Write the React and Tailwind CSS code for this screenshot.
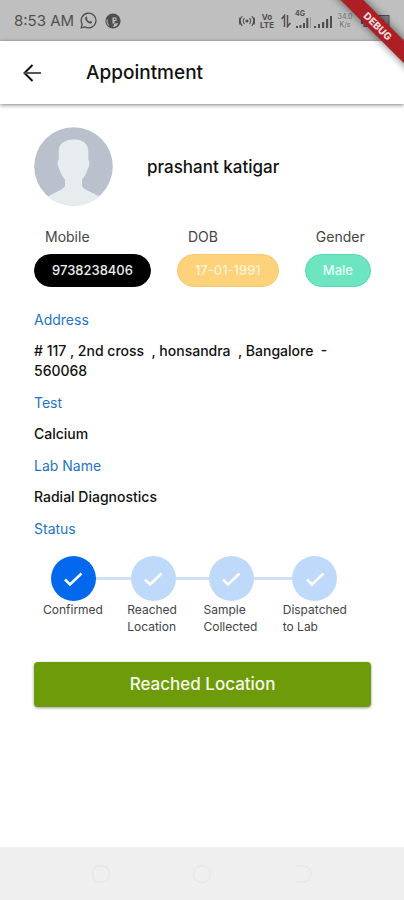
import React from 'react';

const details = [
  { label: 'Address', value: '# 117 , 2nd cross  , honsandra  , Bangalore  - 560068' },
  { label: 'Test', value: 'Calcium' },
  { label: 'Lab Name', value: 'Radial Diagnostics' },
];

const steps = [
  { first: 'Confirmed', second: '', done: true },
  { first: 'Reached', second: 'Location', done: false },
  { first: 'Sample', second: 'Collected', done: false },
  { first: 'Dispatched', second: 'to Lab', done: false },
];

const StatusBar = () => (
  <div className="h-[41px] bg-[#bfbfbf] flex items-center justify-between pl-[14px] pr-[14px] text-[#4f4f4f]">
    <div className="flex items-center">
      <span className="text-[15px] leading-5">8:53 AM</span>
      {/* WhatsApp */}
      <svg className="w-[17px] h-[17px] ml-[6px]" viewBox="0 0 18 18" fill="none" stroke="currentColor" strokeWidth="1.4">
        <path d="M1.2 16.8l1.1-4A7.8 7.8 0 1 1 5.3 15.8z" strokeLinejoin="round" />
        <path d="M5.9 5.2c.5-.6 1.2-.5 1.4 0l.6 1.4c.1.3-.5 1-.5 1.2.5 1.1 1.5 1.9 2.6 2.4.3 0 .8-.8 1.1-.8l1.5.8c.4.3 0 1.3-.6 1.7-1.1.7-3 0-4.7-1.6C5.7 8.7 5 6.5 5.9 5.2z" fill="currentColor" stroke="none" />
      </svg>
      {/* Notification */}
      <svg className="w-4 h-4 ml-2" viewBox="0 0 16 16">
        <circle cx="8" cy="8" r="7.6" fill="currentColor" />
        <path d="M7.5 4.500h4v3.500h-2v2.500h-2z" fill="#bfbfbf" />
        <path d="M9 5.500h1.500v1.500H9z" fill="currentColor" />
        <path d="M9.500 10.500l3.500-.5a5.500 5.500 0 0 1-5 4z" fill="#bfbfbf" />
        <path d="M2.200 6.500a6 6 0 0 0 1.500 6" stroke="#bfbfbf" fill="none" />
      </svg>
    </div>

    <div className="flex items-center">
      {/* Hotspot */}
      <svg className="w-4 h-4" viewBox="0 0 16 16" fill="none" stroke="currentColor" strokeWidth="1.2">
        <circle cx="8" cy="8" r="1.6" fill="currentColor" stroke="none" />
        <path d="M5.5 5.2a4 4 0 0 0 0 5.6M10.5 5.2a4 4 0 0 1 0 5.6M3.2 3.2a7 7 0 0 0 0 9.6M12.8 3.2a7 7 0 0 1 0 9.6M1.2 4.5a8 8 0 0 0 0 7M14.8 4.5a8 8 0 0 1 0 7" />
      </svg>
      <span className="ml-1 w-4 text-center text-[8px] leading-[8px] font-bold">Vo LTE</span>
      {/* Data arrows */}
      <svg className="w-[10px] h-[14px] ml-[6px]" viewBox="0 0 10 14" fill="none" stroke="currentColor" strokeWidth="1.5">
        <path d="M3.5 13V1.5L.5 5M6.500 1v11.500l3-3.500" />
      </svg>
      {/* Signal 4G */}
      <div className="ml-1 relative">
        <span className="absolute -top-1 left-0 text-[7px] leading-[7px] font-bold">4G</span>
        <svg className="w-[16px] h-[14px]" viewBox="0 0 16 14" fill="currentColor">
          <path d="M1 12h2v2H1zM4.5 11h2v3h-2zM8 9h2v5H8zM11.3 4h2v10h-2z" />
          <path d="M15 3h1v11h-1z" opacity="0.35" />
        </svg>
      </div>
      <svg className="w-[18px] h-[14px] ml-[3px]" viewBox="0 0 18 14" fill="currentColor">
        <path d="M0 12h2v2H0zM4 10h2v4H4zM8 8h2.2v6H8zM12 5h2.2v9H12zM16 2h2v12h-2z" />
      </svg>
      <span className="ml-1 w-[18px] text-center text-[7px] leading-[8px] opacity-70">34.0 K/s</span>
      {/* Battery */}
      <svg className="w-[32px] h-[14px] ml-1" viewBox="0 0 32 14">
        <path d="M3 4h2v6H3z" fill="currentColor" />
        <rect x="6" y="1.5" width="25" height="11" fill="#858585" stroke="currentColor" />
      </svg>
    </div>
  </div>
);

const DebugBanner = () => (
  <div className="absolute top-0 right-0 w-20 h-20 overflow-hidden pointer-events-none">
    <div className="absolute top-[18px] -left-[6px] w-[120px] h-4 rotate-45 bg-[#ad1f24] text-[#f3dcdc] text-[10px] leading-4 font-extrabold text-center shadow-[0_0_8px_rgba(0,0,0,0.6)]">
      DEBUG
    </div>
  </div>
);

const Check = () => (
  <svg className="w-[22px] h-[22px]" viewBox="0 0 22 22" fill="none" stroke="white" strokeWidth="2.5">
    <path d="M3 11.5l5 5L19.500 5.500" />
  </svg>
);

const Field = ({ label, value, color }) => (
  <div>
    <div className="pl-[11px] text-[14px] leading-5 text-[#444444]">{label}</div>
    <div className={`mt-[7px] h-[33px] px-[17px] rounded-full border flex items-center text-[13px] font-medium ${color}`}>
      {value}
    </div>
  </div>
);

const App = () => {
  return (
    <div className="relative min-h-screen flex flex-col bg-white text-[#111111] font-[Inter,sans-serif]">
      <StatusBar />

      {/* App Bar */}
      <header className="h-[63px] px-5 flex items-center shadow-[0_1px_4px_rgba(0,0,0,0.5)]">
        <button aria-label="Back" className="w-6 h-6 flex items-center justify-center">
          <svg className="w-[18px] h-[18px]" viewBox="0 0 18 18" fill="none" stroke="currentColor" strokeWidth="2">
            <path d="M9.500 1L1.500 9l8 8" />
            <path d="M1.500 9H18" stroke="#555555" />
          </svg>
        </button>
        <h1 className="ml-[42px] text-[19px] leading-6 font-medium">Appointment</h1>
      </header>

      <main className="flex-1 pl-[34px] pr-[33px] pt-[23px]">
        {/* Patient */}
        <div className="flex items-center gap-[34px]">
          <svg className="w-[79px] h-[79px] shrink-0" viewBox="0 0 79 79">
            <defs>
              <clipPath id="avatar">
                <circle cx="39.5" cy="39.5" r="39.3" />
              </clipPath>
            </defs>
            <g clipPath="url(#avatar)">
              <rect width="79" height="79" fill="#bac1cc" />
              <path
                d="M39.500 12.500C49 12 54.500 17 54.300 25v8c1.700 1 1.300 6-.8 9.500-1.200 4.500-3.200 7.500-5.500 10v6.500c2 4 10 6 17 10.500l8 12H6l8-12c7-4.500 15-6.500 17-10.500v-6.500c-2.300-2.500-4.300-5.500-5.500-10-2.100-3.500-2.500-8.500-.8-9.500v-8c-.2-6 2.800-9 6.300-10.500 1.500-1.300 4.500-2 8.500-2z"
                fill="#e7edee"
              />
            </g>
          </svg>
          <div className="text-[17px] leading-6 font-medium">prashant katigar</div>
        </div>

        <div className="mt-[21px] flex justify-between">
          <Field label="Mobile" value="9738238406" color="bg-black border-black text-[#eeeeee]" />
          <Field label="DOB" value="17-01-1991" color="bg-[#fdd27a] border-[#f5c66a] text-[#fff3d6]" />
          <Field label="Gender" value="Male" color="bg-[#6de5c0] border-[#54d9b0] text-[#e6fff6]" />
        </div>

        {/* Details */}
        <dl className="mt-[23px] text-[14px] leading-5">
          {details.map((item) => (
            <div key={item.label} className="mb-3">
              <dt className="text-[#1f74c4]">{item.label}</dt>
              <dd className="mt-[11px] whitespace-pre-wrap font-medium">{item.value}</dd>
            </div>
          ))}
        </dl>
        <h2 className="text-[14px] leading-5 text-[#1f74c4]">Status</h2>

        {/* Progress */}
        <ol className="mt-[17px] -ml-[3px] mr-3 grid grid-cols-[84fr_76fr_79fr_88fr]">
          {steps.map((step, i) => (
            <li key={step.first}>
              <div className="flex items-center">
                <span className={`flex-1 h-[3px] ${i === 0 ? '' : 'bg-[#cfe0f8]'}`} />
                <span className={`w-[45px] h-[45px] rounded-full flex items-center justify-center ${step.done ? 'bg-[#0268ee]' : 'bg-[#bfd9fa]'}`}>
                  <Check />
                </span>
                <span className={`flex-1 h-[3px] ${i === steps.length - 1 ? '' : 'bg-[#cfe0f8]'}`} />
              </div>
              <div className="pl-3 text-[12px] leading-[17px] text-[#444444] whitespace-nowrap">
                {step.first}
                <br />
                {step.second}
              </div>
            </li>
          ))}
        </ol>

        <button className="mt-[27px] w-full h-[45px] rounded bg-[#6e9b0a] text-[#f7fbe9] text-[17px] font-medium shadow-[0_1px_3px_rgba(0,0,0,0.4)]">
          Reached Location
        </button>
      </main>

      {/* System Navigation */}
      <nav className="h-[53px] bg-[#efefef] flex items-center justify-around px-[51px]">
        <svg className="w-5 h-5" viewBox="0 0 20 20" fill="none" stroke="#e7e7e7" strokeWidth="1.5">
          <rect x="2" y="2" width="16" height="16" rx="6" />
        </svg>
        <svg className="w-5 h-5" viewBox="0 0 20 20" fill="none" stroke="#e7e7e7" strokeWidth="1.5">
          <circle cx="10" cy="10" r="8.5" />
        </svg>
        <svg className="w-5 h-5" viewBox="0 0 20 20" fill="none" stroke="#e7e7e7" strokeWidth="1.5">
          <path d="M2 2h8a8 8 0 0 1 0 16H2" />
        </svg>
      </nav>

      <DebugBanner />
    </div>
  );
};

export default App;
